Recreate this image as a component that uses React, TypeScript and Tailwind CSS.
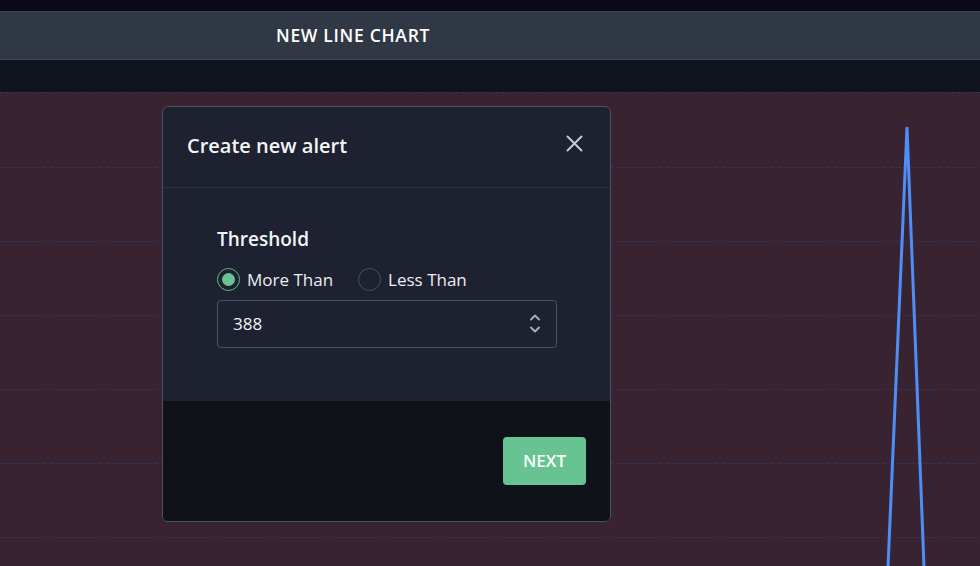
import React from "react";

function Chart() {
  const grid = [74, 148, 222, 296, 370, 444];
  return (
    <svg className="absolute inset-0" width="980" height="474" viewBox="0 0 980 474">
      {grid.map((y) => (
        <line key={y} x1="0" x2="980" y1={y + 0.5} y2={y + 0.5} stroke="#2c3459" strokeWidth="1" strokeDasharray="5 2" />
      ))}
      <polyline points="888,474 907,34 924,474" fill="none" stroke="#4f8ef7" strokeWidth="3" strokeLinejoin="miter" />
    </svg>
  );
}

function Radio({ checked, label }: { checked: boolean; label: string }) {
  return (
    <label className="flex items-center gap-[7px]">
      <span
        className={
          checked
            ? "flex h-[23px] w-[23px] items-center justify-center rounded-full border-[1.5px] border-[#5fb886]"
            : "flex h-[23px] w-[23px] items-center justify-center rounded-full border-[1.5px] border-[#4b5264]"
        }
      >
        {checked && <span className="h-[13px] w-[13px] rounded-full bg-[#68c392]" />}
      </span>
      <span className="text-[17px] text-[#eceef2]">{label}</span>
    </label>
  );
}

export default function App() {
  return (
    <div className="relative flex h-[566px] w-[980px] flex-col overflow-hidden bg-[#3a2331]" style={{ fontFamily: "'Open Sans', 'Noto Sans', sans-serif" }}>
      <div className="h-[11px] bg-[#0b0819]" />
      <div className="flex h-[49px] items-center border-y border-[#3e4554] bg-[#313845] pl-[276px]">
        <span className="text-[17.5px] font-semibold tracking-[0.7px] text-white">
          NEW LINE CHART
        </span>
      </div>
      <div className="h-[32px] bg-[#10141c]" />
      <div className="border-t border-dashed border-[#2a3a5c]" />
      <div className="relative flex-1">
        <Chart />
      </div>

      <div className="absolute left-[162px] top-[106px] flex h-[416px] w-[449px] flex-col overflow-hidden rounded-[6px] border border-[#4b5263] bg-[#1d2130]">
        <div className="flex h-[81px] items-center justify-between border-b border-[#2a3043] pl-[24px] pr-[27px] pb-[2px]">
          <h2 className="text-[20px] font-semibold text-[#f3f4f7]">Create new alert</h2>
          <svg className="mb-[5px]" width="17" height="17" viewBox="0 0 17 17" fill="none">
            <path d="M1.5 1.5 L15.5 15.5 M15.5 1.5 L1.5 15.5" stroke="#c5cad6" strokeWidth="2" strokeLinecap="round" />
          </svg>
        </div>
        <div className="flex flex-1 flex-col pl-[54px] pr-[54px] pt-[37px]">
          <div className="text-[19px] font-semibold leading-[28px] text-[#f3f4f7]">Threshold</div>
          <div className="mt-[14px] flex items-center gap-[25px]">
            <Radio checked label="More Than" />
            <Radio checked={false} label="Less Than" />
          </div>
          <div className="mt-[7px] flex h-[48px] w-[340px] items-center justify-between rounded-[4px] border border-[#4b5263] pl-[15px] pr-[14px]">
            <span className="text-[17px] text-[#f3f4f7]">388</span>
            <svg width="14" height="26" viewBox="0 0 14 26" fill="none">
              <path d="M3 8.5 L7 4.5 L11 8.5" stroke="#aab0bf" strokeWidth="1.8" strokeLinecap="round" strokeLinejoin="round" />
              <path d="M3 16.5 L7 20.5 L11 16.5" stroke="#aab0bf" strokeWidth="1.8" strokeLinecap="round" strokeLinejoin="round" />
            </svg>
          </div>
        </div>
        <div className="flex h-[120px] items-center justify-end bg-[#0f1219] pr-[24px]">
          <button className="flex h-[48px] w-[83px] items-center justify-center rounded-[4px] bg-[#68c392] text-[17px] font-semibold text-white">
            NEXT
          </button>
        </div>
      </div>
    </div>
  );
}
